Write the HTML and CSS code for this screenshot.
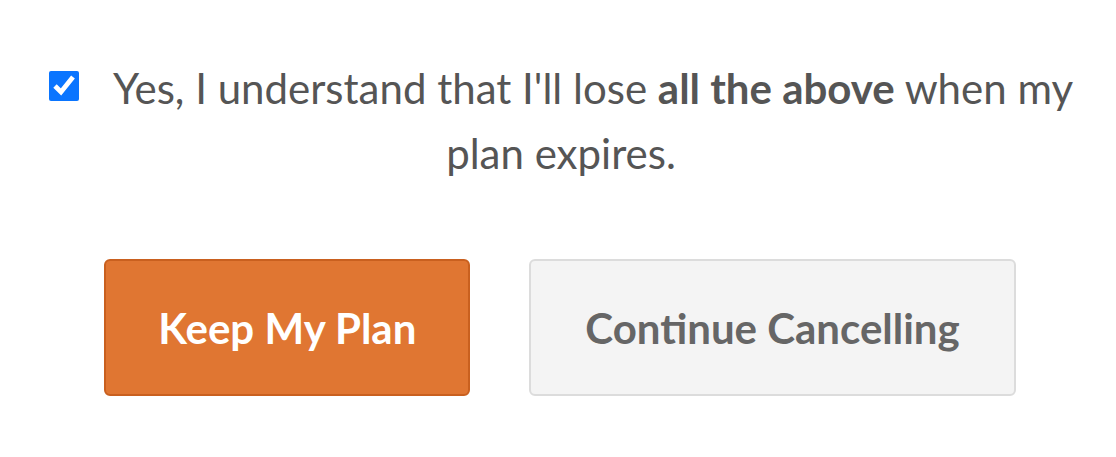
FILE: index.html
```html
<!DOCTYPE html>
<html lang="en">
<head>
    <meta charset="UTF-8">
    <meta name="viewport" content="width=device-width, initial-scale=1.0">
    <title>Cancel Plan</title>
    <link rel="stylesheet" href="styles.css">
</head>
<body>
    <div class="confirm">
        <p class="confirm-text">
            <input type="checkbox" class="confirm-check" checked>Yes, I understand that I'll lose <strong>all the above</strong> when my plan expires.
        </p>
        <div class="actions">
            <button class="btn btn-keep">Keep My Plan</button>
            <button class="btn btn-cancel">Continue Cancelling</button>
        </div>
    </div>
</body>
</html>
```

FILE: styles.css
```css
body {
    font-family: Lato, "Open Sans", sans-serif;
    background-color: #fff;
    margin: 0;
    padding: 0;
    color: #555;
}
.confirm {
    padding: 56px 40px 0;
}
.confirm-text {
    margin: 0;
    padding-left: 6px;
    text-align: center;
    font-size: 42px;
    line-height: 65px;
}
.confirm-text strong {
    font-weight: 700;
}
.confirm-check {
    width: 30px;
    height: 30px;
    margin: 0 34px 0 0;
    vertical-align: 3px;
    accent-color: #0a75ff;
}
.actions {
    display: flex;
    justify-content: center;
    gap: 59px;
    margin-top: 73px;
    padding-left: 4px;
}
.btn {
    font-family: Lato, "Open Sans", sans-serif;
    font-weight: 700;
    font-size: 42px;
    height: 137px;
    padding: 0 52px;
    border-radius: 6px;
    cursor: pointer;
}
.btn-keep {
    background-color: #e07632;
    border: 2px solid #c9601f;
    color: #fff;
}
.btn-cancel {
    padding: 0 54px;
    background-color: #f4f4f4;
    border: 2px solid #dcdcdc;
    color: #666;
}
```
